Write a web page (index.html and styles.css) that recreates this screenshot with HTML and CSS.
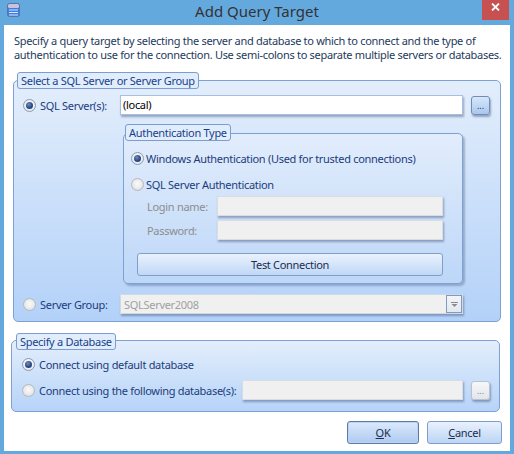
FILE: index.html
```html
<!DOCTYPE html>
<html>
<head>
<meta charset="utf-8">
<title>Add Query Target</title>
<link rel="stylesheet" href="styles.css">
</head>
<body>
<div class="window">
  <div class="titlebar">
    <div class="tb-left">
      <svg class="app-icon" width="13" height="14" viewBox="0 0 13 14">
        <rect x="0.5" y="0.5" width="12" height="13" rx="2" fill="#3d7fe2" stroke="#5b74a6"/>
        <rect x="1" y="1" width="11" height="4" rx="1.5" fill="#c8c4dc"/>
        <path d="M2 7h9M2 9.5h9M2 12h9" stroke="#d6e6ff" stroke-width="1"/>
      </svg>
    </div>
    <div class="title">Add Query Target</div>
    <div class="tb-right">
      <div class="close">
        <svg width="9" height="8" viewBox="0 0 9 8"><path d="M1 0.5L8 7.5M8 0.5L1 7.5" stroke="#fff" stroke-width="1.8"/></svg>
      </div>
    </div>
  </div>
  <div class="client">
    <p class="desc">Specify a query target by selecting the server and database to which to connect and the type of<br>authentication to use for the connection. Use semi-colons to separate multiple servers or databases.</p>

    <div class="group g1">
      <div class="legend">Select a SQL Server or Server Group</div>
      <div class="row r-server">
        <label class="opt w97"><span class="radio checked"></span>SQL Server(s):</label>
        <div class="input wide">(local)</div>
        <div class="dots">...</div>
      </div>

      <div class="group auth">
        <div class="legend">Authentication Type</div>
        <div class="row r-win"><label class="opt"><span class="radio checked"></span>Windows Authentication (Used for trusted connections)</label></div>
        <div class="row r-sqlauth"><label class="opt"><span class="radio dis"></span>SQL Server Authentication</label></div>
        <div class="row r-login"><span class="flabel">Login name:</span><div class="input disabled cred"></div></div>
        <div class="row r-pass"><span class="flabel">Password:</span><div class="input disabled cred"></div></div>
        <div class="btn test">Test Connection</div>
      </div>

      <div class="row r-group">
        <label class="opt w97"><span class="radio dis"></span>Server Group:</label>
        <div class="combo">
          <span class="combo-text">SQLServer2008</span>
          <span class="drop">
            <svg width="7" height="5" viewBox="0 0 7 5"><path d="M0 0.5h7" stroke="#8a8a8a"/><path d="M0.5 2h6L3.5 5z" fill="#8a8a8a"/></svg>
          </span>
        </div>
      </div>
    </div>

    <div class="group g2">
      <div class="legend">Specify a Database</div>
      <div class="row r-def"><label class="opt"><span class="radio checked"></span>Connect using default database</label></div>
      <div class="row r-db">
        <label class="opt w220"><span class="radio dis"></span>Connect using the following database(s):</label>
        <div class="input disabled db"></div>
        <div class="dots dis">...</div>
      </div>
    </div>

    <div class="actions">
      <div class="btn ok"><span><u>O</u>K</span></div>
      <div class="btn cancel"><span><u>C</u>ancel</span></div>
    </div>
  </div>
</div>
</body>
</html>
```
FILE: styles.css
```css
* { box-sizing: border-box; }
html, body { margin: 0; padding: 0; }
body {
  width: 514px;
  height: 454px;
  overflow: hidden;
  font-family: "Noto Sans", "Open Sans", sans-serif;
  font-size: 11px;
  letter-spacing: -0.3px;
  color: #1b3c7c;
}
.window {
  width: 514px;
  height: 454px;
  background: #64a9de;
  display: flex;
  flex-direction: column;
}
.titlebar {
  height: 25px;
  flex: none;
  display: grid;
  grid-template-columns: 1fr auto 1fr;
}
.tb-left { padding: 3px 0 0 7px; }
.app-icon { display: block; }
.title {
  font-size: 15px;
  letter-spacing: 0;
  line-height: 23px;
  color: #333;
}
.tb-right { display: flex; justify-content: flex-end; padding-right: 5px; }
.close {
  width: 27px;
  height: 20px;
  background: #c75050;
  display: flex;
  justify-content: center;
  padding-top: 3px;
}
.close svg { display: block; }

.client {
  flex: 1;
  margin: 0 4px 3px;
  background: #fff;
  padding-top: 9px;
  display: flex;
  flex-direction: column;
}
.desc {
  margin: 0 0 0 10px;
  line-height: 14px;
  color: #1e395b;
  white-space: nowrap;
}

.group {
  position: relative;
  border: 1px solid #7fa0d2;
  border-radius: 5px;
}
.legend {
  position: absolute;
  height: 17px;
  padding: 0 3px;
  border: 1px solid #7b9dd1;
  border-radius: 3px;
  background: #e2edfc;
  line-height: 15px;
  color: #15428b;
  white-space: nowrap;
}
.g1 {
  margin: 18px 9px 0;
  padding-bottom: 7px;
  background: linear-gradient(#e3eefc, #b3d1f8);
}
.g1 > .legend { left: 3px; top: -9px; }

.row {
  display: flex;
  align-items: center;
  height: 20px;
}
.opt {
  display: flex;
  align-items: center;
  gap: 4px;
  white-space: nowrap;
}
.w97 { width: 97px; flex: none; }
.w220 { width: 220px; flex: none; }

.radio {
  position: relative;
  width: 13px;
  height: 13px;
  flex: none;
  border-radius: 50%;
  border: 1px solid #8d9ab0;
  background: radial-gradient(circle at 50% 45%, #ffffff 0, #f1f4f8 45%, #d4dbe6 100%);
}
.radio.checked::after {
  content: "";
  position: absolute;
  left: 2px;
  top: 2px;
  width: 7px;
  height: 7px;
  border-radius: 50%;
  background: radial-gradient(circle at 40% 35%, #6f8fc4 0, #2c4a80 55%, #1d3566 100%);
}
.radio.dis {
  border-color: #b5b9bf;
  background: radial-gradient(circle at 50% 45%, #fafafa 0, #ececec 50%, #d3d3d3 100%);
}

.input {
  height: 20px;
  border: 1px solid #a7c0e2;
  background: #fff;
  box-shadow: 1px 2px 2px rgba(60, 80, 115, 0.45);
  color: #000;
  padding: 0 2px;
  line-height: 18px;
}
.input.disabled {
  background: #f0f0f0;
  border-color: #d8dde4;
}
.r-server { margin-top: 14px; padding-left: 9px; }
.wide { width: 343px; }
.dots {
  width: 19px;
  height: 19px;
  margin-left: 8px;
  border: 1px solid #6f8dba;
  border-radius: 3px;
  background: linear-gradient(#d8e7fa, #a9c6ec);
  box-shadow: 1px 2px 2px rgba(60, 80, 115, 0.45);
  color: #1e395b;
  font-size: 9px;
  line-height: 17px;
  text-align: center;
  letter-spacing: 0;
}
.dots.dis {
  border-color: #b8c3d2;
  background: linear-gradient(#f6f7f9, #e3e6ea);
  color: #8a8a8a;
}

.auth {
  margin: 18px 37px 0 109px;
  padding-bottom: 7px;
  background: linear-gradient(#e2edfc, #bdd7f8);
  box-shadow: 2px 2px 2px rgba(60, 80, 115, 0.35);
}
.auth > .legend { left: 1px; top: -10px; }
.r-win { margin-top: 14px; padding-left: 7px; }
.r-win .opt, .r-sqlauth .opt { gap: 2px; }
.r-sqlauth { margin-top: 6px; padding-left: 7px; }
.r-login { margin-top: 2px; }
.r-pass { margin-top: 4px; }
.flabel {
  width: 93px;
  flex: none;
  padding-left: 23px;
  color: #8d8d8d;
}
.cred { width: 226px; }

.btn {
  display: flex;
  align-items: center;
  justify-content: center;
  border: 1px solid #7f9ec9;
  border-radius: 3px;
  background: linear-gradient(#eaf2fd, #c0d8f6);
  color: #1b2d4e;
}
.test {
  height: 23px;
  margin: 13px 19px 0 13px;
}

.r-group { margin-top: 10px; padding-left: 9px; }
.combo {
  width: 343px;
  height: 20px;
  display: flex;
  align-items: center;
  justify-content: space-between;
  border: 1px solid #d3d9e1;
  background: #f0f0f0;
  box-shadow: 1px 2px 2px rgba(60, 80, 115, 0.45);
  padding-left: 3px;
}
.combo-text { color: #a0a0a0; }
.drop {
  width: 16px;
  height: 18px;
  border: 1px solid #7f9bc0;
  background: linear-gradient(#f2f5f9, #e2e8f0);
  display: flex;
  align-items: center;
  justify-content: center;
}
.drop svg { display: block; }

.g2 {
  margin: 18px 10px 0 7px;
  padding-bottom: 11px;
  background: linear-gradient(#e3eefc, #b6d3f8);
}
.g2 > .legend { left: 4px; top: -8px; }
.r-def { margin-top: 13px; padding-left: 10px; }
.r-db { margin-top: 6px; padding-left: 10px; }
.db { width: 221px; }

.actions {
  display: flex;
  justify-content: flex-end;
  gap: 8px;
  margin-top: 9px;
  padding-right: 8px;
}
.actions .btn { height: 23px; }
.ok {
  width: 72px;
  border-color: #5a7aa8;
  box-shadow: inset 0 0 0 1px #bcd3f1;
  background: linear-gradient(#dce9fb, #aecaf0);
}
.cancel {
  width: 75px;
  background: linear-gradient(#e9f1fd, #bcd5f5);
}
```
